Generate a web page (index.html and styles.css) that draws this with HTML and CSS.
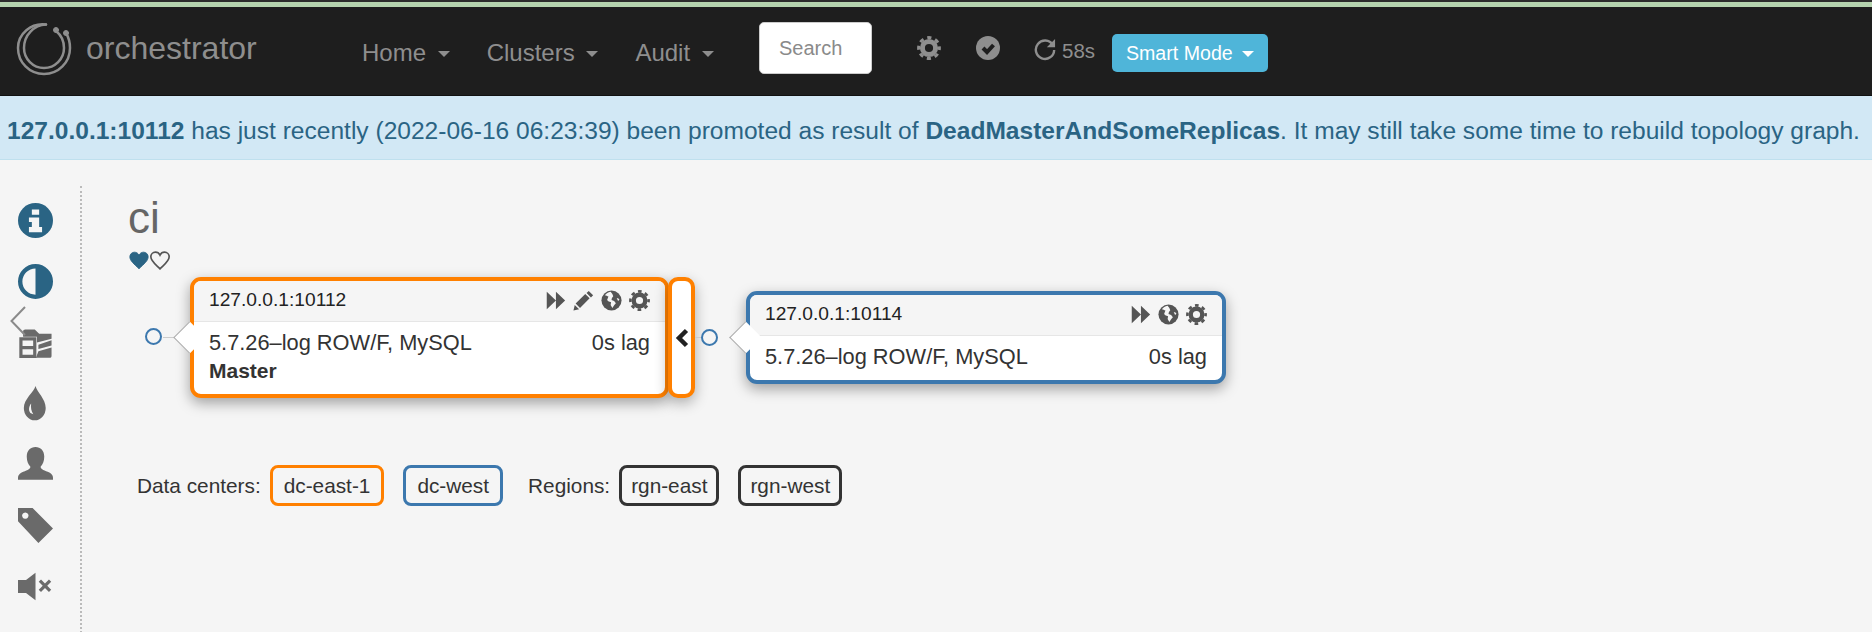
FILE: index.html
```html
<!DOCTYPE html>
<html lang="en">
<head>
    <meta charset="UTF-8">
    <meta name="viewport" content="width=device-width, initial-scale=1.0">
    <title>orchestrator</title>
    <link rel="stylesheet" href="styles.css">
</head>
<body>
    <svg class="sprites" width="0" height="0">
        <symbol id="i-gear" viewBox="0 0 24 24">
            <circle cx="12" cy="12" r="6.6" fill="none" stroke="currentColor" stroke-width="5"/>
            <circle cx="12" cy="12" r="10.4" fill="none" stroke="currentColor" stroke-width="3" stroke-dasharray="4.2 3.97" stroke-dashoffset="2.1"/>
        </symbol>
        <symbol id="i-globe" viewBox="0 0 24 24">
            <circle cx="12" cy="12" r="11.5" fill="currentColor"/>
            <path fill="#f5f5f5" d="M11 2c-3 .5-5 2-6.500 4 1.500 0 2.500 1 4 1.500L7.500 10c-1 1 0 2.500 1.500 3l2.500 1-.5 3 2 3.500 2-3 2-2.500-2-2.500-3-1 .5-2.500L14 7l-1-2.500zM18 9l1.500 3.500L21 11c-.5-1-1.500-2-3-2z"/>
        </symbol>
        <symbol id="i-forward" viewBox="0 0 24 24">
            <path fill="currentColor" d="M2 2l10.500 10L2 22zM12.500 2L23 12 12.500 22z"/>
        </symbol>
        <symbol id="i-pencil" viewBox="0 0 24 24">
            <path fill="currentColor" d="M18 1l5 5-2.500 2.500-5-5zM14 4.500l5 5L8 20.500l-5-5zM2 17l5 5-6.500 1.500z"/>
        </symbol>
        <symbol id="i-heart" viewBox="0 0 24 22">
            <path d="M12 21C6 15 1 11.500 1 6.500 1 3.500 3.500 1 6.500 1 9 1 11 2.500 12 4.500 13 2.500 15 1 17.500 1 20.500 1 23 3.500 23 6.500 23 11.500 18 15 12 21z"/>
        </symbol>
        <symbol id="i-chevron" viewBox="0 0 14 20">
            <path fill="none" stroke="currentColor" stroke-width="4.500" d="M11.500 2.500L4 10l7.500 7.500"/>
        </symbol>
    </svg>

    <div class="topstrip"></div>

    <nav class="navbar">
        <a class="brand">
            <svg class="logo" viewBox="0 0 56 56" fill="none" stroke="#8e8e8e" stroke-linecap="round">
                <path stroke-width="2.500" d="M30 4.500C15 2.500 2 14 2 28c0 14.500 11.500 26 26 26s26-11.500 26-26c0-5-1-10-4-15"/>
                <path stroke-width="2.500" d="M30 4.500C18 5 8 15 8 28c0 11 9 20 20 20s20-9 20-20c0-7-3-13-8-17"/>
                <circle cx="50" cy="13" r="2.500" fill="#8e8e8e"/>
                <circle cx="40" cy="10" r="2.500" fill="#8e8e8e"/>
            </svg>
            <span>orchestrator</span>
        </a>
        <ul class="menu">
            <li>Home <b class="caret"></b></li>
            <li>Clusters <b class="caret"></b></li>
            <li>Audit <b class="caret"></b></li>
        </ul>
        <input class="search" type="text" placeholder="Search">
        <svg class="nav-gear"><use href="#i-gear"/></svg>
        <svg class="nav-check" viewBox="0 0 24 24">
            <circle cx="12" cy="12" r="12" fill="currentColor"/>
            <path fill="none" stroke="#1e1e1e" stroke-width="4" d="M7 12l4 4 6.500-7"/>
        </svg>
        <svg class="nav-refresh" viewBox="0 0 24 24" fill="none" stroke="currentColor" stroke-width="2.600">
            <path d="M20.500 7.500A10 10 0 1 0 22 13"/>
            <path fill="currentColor" stroke="none" d="M23 1v9h-9z"/>
        </svg>
        <span class="countdown">58s</span>
        <button class="mode-btn">Smart Mode <b class="caret"></b></button>
    </nav>

    <div class="alert">
        <strong>127.0.0.1:10112</strong> has just recently (2022-06-16 06:23:39) been promoted as result of <strong>DeadMasterAndSomeReplicas</strong>. It may still take some time to rebuild topology graph.
    </div>

    <div class="page">
        <aside class="sidebar">
            <svg class="side-icon active" viewBox="0 0 24 24">
                <circle cx="12" cy="12" r="12" fill="currentColor"/>
                <path fill="#f5f5f5" d="M9.500 4.500h5v3.500h-5zM7.500 10h7v6.500h2V20H7.500v-3.500h2V13h-2z"/>
            </svg>
            <svg class="side-icon active" viewBox="0 0 24 24">
                <circle cx="12" cy="12" r="10.500" fill="none" stroke="currentColor" stroke-width="3"/>
                <path fill="currentColor" d="M12 1a11 11 0 0 1 0 22z"/>
            </svg>
            <svg class="side-icon" viewBox="0 0 24 24">
                <path fill="none" stroke="currentColor" stroke-width="2.200" d="M2 9.500h9.500v12H2zM2 15.500h9.500"/>
                <path fill="currentColor" d="M3.500 4.500c0-1 .5-1.500 1.500-1.500h6.500l3 3H23v3.500L13 12V8H3.500zM14 13.500L23 10.500v3.500L14 16.500zM14 18l9-2.500V21c0 1-.5 1.500-1.500 1.500H6l-1.500-.5h8z"/>
            </svg>
            <svg class="side-icon" viewBox="0 0 24 24">
                <path fill="currentColor" fill-rule="evenodd" d="M12 0c1 4 7 9 7 15a7.500 8.500 0 0 1-15 0C4 9 11 4 12 0zM9 12c-1.500 2-2 4.500-.5 6.500l2 .8C9 17 8.700 15 9 12z"/>
            </svg>
            <svg class="side-icon" viewBox="0 0 24 24">
                <path fill="currentColor" d="M12 0c3.500 0 6 2.500 6 6.500 0 3-1 5.500-2.500 7 0 2 3 2.500 6 4 1.500.8 2.500 2 2.500 3.500v1.500H0V21c0-1.500 1-2.700 2.500-3.500 3-1.500 6-2 6-4C7 12 6 9.500 6 6.500 6 2.500 8.500 0 12 0z"/>
            </svg>
            <svg class="side-icon" viewBox="0 0 24 24">
                <path fill="currentColor" fill-rule="evenodd" d="M0 0h10l14 14-10 10L0 9zM5 3a2.200 2.200 0 1 0 .01 0z"/>
            </svg>
            <svg class="side-icon" viewBox="0 0 24 24">
                <path fill="currentColor" d="M0 7.500h5.500L12 2.500v19l-6.500-5H0z"/>
                <path fill="none" stroke="currentColor" stroke-width="2.200" d="M15 8l7 7M22 8l-7 7"/>
            </svg>
            <svg class="side-toggle" viewBox="0 0 16 30" fill="none" stroke="#8a8a8a" stroke-width="2">
                <path d="M15 1L1.500 15 15 29"/>
            </svg>
        </aside>

        <main class="content">
            <h1 class="cluster-title">ci</h1>
            <div class="hearts">
                <svg class="heart full"><use href="#i-heart"/></svg>
                <svg class="heart empty"><use href="#i-heart"/></svg>
            </div>

            <div class="topology">
                <span class="dot dot-a"></span>
                <span class="wire wire-a"></span>
                <div class="node node-master">
                    <span class="pointer"></span>
                    <div class="node-head">
                        <span>127.0.0.1:10112</span>
                        <span class="node-tools">
                            <svg><use href="#i-forward"/></svg>
                            <svg><use href="#i-pencil"/></svg>
                            <svg><use href="#i-globe"/></svg>
                            <svg><use href="#i-gear"/></svg>
                        </span>
                    </div>
                    <div class="node-body">
                        <div class="node-row"><span>5.7.26–log ROW/F, MySQL</span><span>0s lag</span></div>
                        <div class="node-role">Master</div>
                    </div>
                </div>
                <div class="collapse-btn"><svg><use href="#i-chevron"/></svg></div>
                <span class="wire wire-b"></span>
                <span class="dot dot-b"></span>
                <div class="node node-replica">
                    <span class="pointer"></span>
                    <div class="node-head">
                        <span>127.0.0.1:10114</span>
                        <span class="node-tools">
                            <svg><use href="#i-forward"/></svg>
                            <svg><use href="#i-globe"/></svg>
                            <svg><use href="#i-gear"/></svg>
                        </span>
                    </div>
                    <div class="node-body">
                        <div class="node-row"><span>5.7.26–log ROW/F, MySQL</span><span>0s lag</span></div>
                    </div>
                </div>
            </div>

            <div class="legend">
                <span class="legend-label">Data centers:</span>
                <span class="tag tag-east">dc-east-1</span>
                <span class="tag tag-west">dc-west</span>
                <span class="legend-label regions">Regions:</span>
                <span class="tag tag-region">rgn-east</span>
                <span class="tag tag-region">rgn-west</span>
            </div>
        </main>
    </div>
</body>
</html>
```

FILE: styles.css
```css
html, body {
    height: 100%;
}
body {
    margin: 0;
    height: 632px;
    overflow: hidden;
    background-color: #f5f5f5;
    color: #333;
    font-family: "Liberation Sans", Arial, sans-serif;
    font-size: 21px;
}
.sprites {
    display: block;
    height: 0;
}
.topstrip {
    height: 5px;
    margin-top: 2px;
    background-color: #b5d3ae;
    box-shadow: 0 -2px 0 #2c2c2c;
}

/* navbar */
.navbar {
    display: flex;
    align-items: center;
    height: 88px;
    padding-left: 16px;
    background-color: #1e1e1e;
    color: #8e8e8e;
    border-bottom: 1px solid #111;
}
.brand {
    display: flex;
    align-items: center;
    gap: 14px;
    width: 346px;
    font-size: 32px;
    margin-top: -6px;
}
.logo {
    width: 56px;
    height: 56px;
}
.menu {
    display: flex;
    gap: 37px;
    width: 397px;
    margin: 0;
    padding: 3px 0 0;
    list-style: none;
    font-size: 24px;
}
.caret {
    display: inline-block;
    width: 0;
    height: 0;
    margin-left: 5px;
    vertical-align: middle;
    border-top: 6px solid currentColor;
    border-left: 6.5px solid transparent;
    border-right: 6.5px solid transparent;
}
.search {
    width: 113px;
    height: 52px;
    box-sizing: border-box;
    margin-top: -6px;
    padding: 0 19px;
    border: 1px solid #ccc;
    border-radius: 5px;
    background: #fff;
    font-family: inherit;
    font-size: 20px;
}
.search::placeholder {
    color: #8a8a8a;
    opacity: 1;
}
.nav-gear {
    width: 24px;
    height: 24px;
    margin: -6px 0 0 45px;
}
.nav-check {
    width: 24px;
    height: 24px;
    margin: -6px 0 0 35px;
}
.nav-refresh {
    width: 22px;
    height: 24px;
    margin: -4px 0 0 34px;
}
.countdown {
    margin: 0 0 0 6px;
    font-size: 20.5px;
}
.mode-btn {
    width: 156px;
    height: 38px;
    margin: 4px 0 0 17px;
    padding: 0;
    border: none;
    border-radius: 5px;
    background-color: #4fb5d9;
    color: #fff;
    font-family: inherit;
    font-size: 19.6px;
}
.mode-btn .caret {
    margin-left: 4px;
}

/* alert */
.alert {
    height: 64px;
    box-sizing: border-box;
    padding: 21px 0 0 7px;
    background-color: #d2e8f5;
    border-bottom: 1px solid #bfe0ee;
    color: #2a6484;
    font-size: 24.55px;
    white-space: nowrap;
}

/* sidebar + main */
.page {
    display: flex;
    margin-top: 26px;
}
.sidebar {
    position: relative;
    display: flex;
    flex-direction: column;
    align-items: center;
    gap: 26px;
    width: 70px;
    height: 446px;
    box-sizing: content-box;
    padding-top: 17px;
    border-right: 2px dotted #bbb;
    margin-left: 10px;
    margin-right: 46px;
    color: #6a6a6a;
}
.side-icon {
    flex: none;
    width: 35px;
    height: 35px;
    margin-left: -20px;
}
.side-icon.active {
    color: #2a6484;
}
.side-toggle {
    position: absolute;
    left: 0;
    top: 120px;
    width: 16px;
    height: 30px;
}
.content {
    flex: 1;
}
.cluster-title {
    margin: 0;
    color: #666;
    font-size: 44px;
    font-weight: normal;
    line-height: 50px;
    margin-top: 7px;
}
.hearts {
    display: flex;
    gap: 1px;
    height: 20px;
    margin: 8px 0 0 1px;
}
.heart {
    width: 20px;
    height: 19px;
}
.heart.full {
    fill: #2a6484;
    stroke: #2a6484;
}
.heart.empty {
    fill: none;
    stroke: #555;
    stroke-width: 2;
}

/* topology canvas, nodes sit at their drawn positions */
.topology {
    position: relative;
    height: 121px;
    margin-top: 6px;
}
.dot {
    position: absolute;
    width: 13px;
    height: 13px;
    border: 2.5px solid #3c78ae;
    border-radius: 50%;
    background: #f5f5f5;
}
.dot-a {
    left: 17px;
    top: 51px;
}
.dot-b {
    left: 573px;
    top: 52px;
}
.wire {
    position: absolute;
    top: 60px;
    height: 1px;
    background: #ccc;
}
.wire-a {
    left: 35px;
    width: 10px;
}
.wire-b {
    left: 567px;
    width: 8px;
}
.node {
    position: absolute;
    box-sizing: border-box;
    border: 4px solid;
    border-radius: 11px;
    background: #fff;
    box-shadow: 0 5px 14px rgba(0, 0, 0, .35);
    font-size: 21.8px;
    color: #333;
}
.node-master {
    left: 62px;
    top: 0;
    width: 479px;
    height: 121px;
    border-color: #ff8000;
}
.node-replica {
    left: 618px;
    top: 14px;
    width: 480px;
    height: 93px;
    border-color: #3c78ae;
}
.pointer {
    position: absolute;
    top: 45px;
    left: -16px;
    width: 23px;
    height: 23px;
    box-sizing: border-box;
    background: #fff;
    border-left: 1px solid #aaa;
    border-bottom: 1px solid #aaa;
    transform: rotate(45deg);
}
.node-replica .pointer {
    top: 31px;
}
.node-head {
    display: flex;
    justify-content: space-between;
    align-items: center;
    height: 41px;
    box-sizing: border-box;
    padding: 0 15px 2px;
    border-radius: 7px 7px 0 0;
    background: #f5f5f5;
    border-bottom: 1px solid #e6e6e6;
    font-size: 19.2px;
    color: #222;
}
.node-tools {
    display: flex;
    gap: 7px;
    color: #555;
}
.node-tools svg {
    width: 21px;
    height: 21px;
}
.node-body {
    padding: 7px 15px 0;
}
.node-row {
    display: flex;
    justify-content: space-between;
    line-height: 28px;
}
.node-role {
    margin-top: 1px;
    font-weight: bold;
    font-size: 21px;
    line-height: 26px;
}
.collapse-btn {
    position: absolute;
    left: 540px;
    top: 0;
    display: flex;
    align-items: center;
    justify-content: center;
    width: 27px;
    height: 121px;
    box-sizing: border-box;
    border: 4px solid #ff8000;
    border-radius: 10px;
    background: #fff;
    box-shadow: 0 5px 14px rgba(0, 0, 0, .3);
    color: #222;
}
.collapse-btn svg {
    width: 14px;
    height: 20px;
}

/* legend */
.legend {
    display: flex;
    align-items: center;
    margin: 67px 0 0 9px;
    font-size: 20.8px;
}
.legend-label {
    margin-right: 9px;
}
.regions {
    margin-left: 6px;
}
.tag {
    display: flex;
    align-items: center;
    height: 41px;
    box-sizing: border-box;
    padding: 0 11px;
    margin-right: 19px;
    border: 3.5px solid #333;
    border-radius: 8px;
}
.tag-east {
    border-color: #ff8000;
}
.tag-west {
    border-color: #3c78ae;
}
.tag-region {
    padding: 0 9px;
}
```
